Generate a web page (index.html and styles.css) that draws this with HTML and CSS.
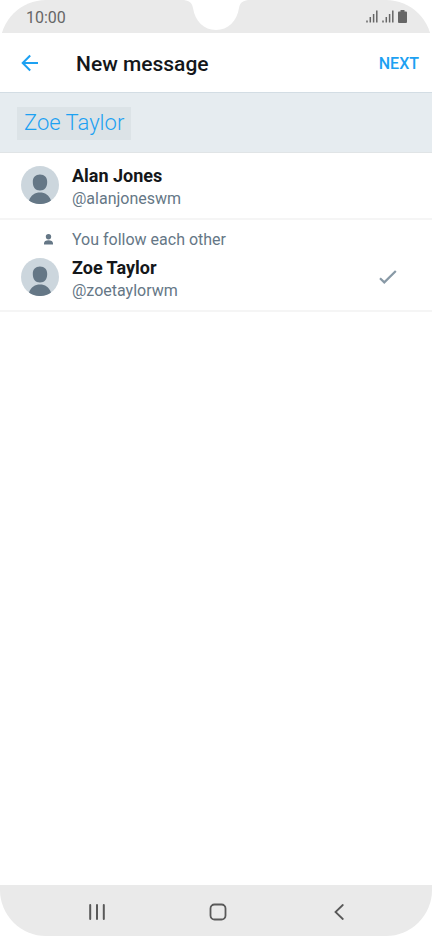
FILE: index.html
```html
<!DOCTYPE html>
<html lang="en">
<head>
<meta charset="utf-8">
<meta name="viewport" content="width=device-width, initial-scale=1">
<title>New message</title>
<link rel="stylesheet" href="styles.css">
</head>
<body>
<div class="phone">
  <div class="status">
    <time class="clock">10:00</time>
    <svg class="notch" width="64" height="31" viewBox="0 0 64 31" aria-hidden="true"><path fill="#fff" d="M0 0C6 1 8 3 9 8C11 21 20 30 32 30S53 21 55 8C56 3 58 1 64 0Z"/></svg>
    <div class="indicators">
      <svg width="12" height="13" viewBox="0 0 12 13" aria-hidden="true"><path d="M1 10.500v2M4.300 7v5.500M7.600 4v8.500M10.800 .5v12" stroke="#666" stroke-width="1.500"/></svg>
      <svg width="12" height="13" viewBox="0 0 12 13" aria-hidden="true"><path d="M1 10.500v2M4.300 7v5.500M7.600 4v8.500M10.800 .5v12" stroke="#666" stroke-width="1.500"/></svg>
      <svg class="battery" width="9" height="13" viewBox="0 0 9 13" aria-hidden="true"><path fill="#666" d="M2.500 0h4v1.500H8Q9 1.500 9 2.500V12Q9 13 8 13H1Q0 13 0 12V2.500Q0 1.500 1 1.500H2.500Z"/></svg>
    </div>
  </div>
  <header class="bar">
    <button class="back" type="button" aria-label="Back">
      <svg width="18" height="18" viewBox="0 0 18 18" fill="none" stroke="#1da1f2" stroke-width="2" aria-hidden="true"><path d="M17 9H2M9.200 1.500L1.700 9L9.200 16.500"/></svg>
    </button>
    <h1 class="title">New message</h1>
    <button class="next" type="button">NEXT</button>
  </header>
  <div class="recipients">
    <button class="chip" type="button">Zoe Taylor</button>
  </div>
  <main class="content">
    <ul class="people">
      <li>
        <button class="person" type="button">
          <svg class="avatar" width="38" height="38" viewBox="0 0 38 38" aria-hidden="true"><circle cx="19" cy="19" r="19" fill="#ccd6dd"/><path fill="#657786" d="M19 8.500c4.500 0 7.200 2.800 7.200 7.500 0 5.200-2.500 8.500-7.200 8.500s-7.200-3.300-7.200-8.500c0-4.700 2.700-7.500 7.200-7.500ZM8 34.500C10 29 14 26.500 19 26.500S28 29 30 34.500C24 39.200 14 39.200 8 34.500Z"/></svg>
          <span class="names"><span class="name">Alan Jones</span><span class="handle">@alanjoneswm</span></span>
        </button>
      </li>
      <li>
        <p class="relation">
          <svg width="9" height="11" viewBox="0 0 9 11" aria-hidden="true"><path fill="#657786" d="M4.500 0C6.300 0 7.200 1 7.200 2.600 7.200 4.400 6.200 5.600 4.500 5.600S1.800 4.400 1.800 2.600C1.800 1 2.700 0 4.500 0ZM0 10.500V9.500C0 7.300 1.800 6.300 4.500 6.300S9 7.300 9 9.500V10.500Z"/></svg>
          <span>You follow each other</span>
        </p>
        <button class="person" type="button" aria-pressed="true">
          <svg class="avatar" width="38" height="38" viewBox="0 0 38 38" aria-hidden="true"><circle cx="19" cy="19" r="19" fill="#ccd6dd"/><path fill="#657786" d="M19 8.500c4.500 0 7.200 2.800 7.200 7.500 0 5.200-2.500 8.500-7.200 8.500s-7.200-3.300-7.200-8.500c0-4.700 2.700-7.500 7.200-7.500ZM8 34.500C10 29 14 26.500 19 26.500S28 29 30 34.500C24 39.200 14 39.200 8 34.500Z"/></svg>
          <span class="names"><span class="name">Zoe Taylor</span><span class="handle">@zoetaylorwm</span></span>
          <svg class="check" width="18" height="14" viewBox="0 0 18 14" fill="none" stroke="#8899a6" stroke-width="2.200" aria-hidden="true"><path d="M1 8.200L5.300 12.400L16.800 1"/></svg>
        </button>
      </li>
    </ul>
  </main>
  <nav class="system" aria-label="System">
    <button type="button" aria-label="Recent apps"><svg width="16" height="16" viewBox="0 0 16 16" stroke="#595959" stroke-width="2" stroke-linecap="round" aria-hidden="true"><path d="M1.200 1v14M8 1v14M14.800 1v14"/></svg></button>
    <button type="button" aria-label="Home"><svg width="18" height="18" viewBox="0 0 18 18" fill="none" stroke="#595959" stroke-width="1.800" aria-hidden="true"><rect x="1.500" y="1.500" width="15" height="15" rx="4"/></svg></button>
    <button type="button" aria-label="Back"><svg width="10" height="16" viewBox="0 0 10 16" fill="none" stroke="#595959" stroke-width="1.800" stroke-linecap="round" aria-hidden="true"><path d="M8.800 1L1.500 8L8.800 15"/></svg></button>
  </nav>
</div>
</body>
</html>
```
FILE: styles.css
```css
* {
  box-sizing: border-box;
}

body {
  margin: 0;
  background: #fff;
  color: #14171a;
  font-family: Roboto, "Liberation Sans", sans-serif;
}

button {
  margin: 0;
  padding: 0;
  border: 0;
  background: none;
  color: inherit;
  font: inherit;
  text-align: left;
}

svg {
  display: block;
  flex: none;
}

.phone {
  display: flex;
  flex-direction: column;
  min-height: 100vh;
  overflow: hidden;
  border-radius: 46px;
}

.status {
  position: relative;
  display: flex;
  align-items: center;
  justify-content: space-between;
  height: 33px;
  padding: 2px 25px 0 26px;
  background: #eaeaea;
}

.clock {
  color: #666;
  font-size: 16px;
  line-height: 20px;
}

.notch {
  position: absolute;
  top: 0;
  left: 50%;
  transform: translateX(-50%);
}

.indicators {
  display: flex;
  gap: 4px;
  padding-bottom: 2px;
}

.bar {
  display: flex;
  align-items: center;
  height: 60px;
  padding: 2px 13px 0 21px;
  border-bottom: 1px solid #d3dde4;
}

.back {
  width: 55px;
  padding-bottom: 1px;
}

.title {
  flex: 1;
  margin: 0;
  font-size: 21px;
  line-height: 28px;
  font-weight: 500;
}

.next {
  color: #1da1f2;
  font-size: 16px;
  line-height: 20px;
  font-weight: 500;
}

.recipients {
  padding: 14px 17px 12px;
  border-bottom: 1px solid #e0e4e6;
  background: #e6ecf0;
}

.chip {
  display: block;
  padding: 0 7px 2px;
  background: #dce3e7;
  color: #1da1f2;
  font-size: 22px;
  line-height: 31px;
  font-weight: 300;
}

.content {
  flex: 1;
}

.people {
  margin: 0;
  padding: 0;
  list-style: none;
}

.people li {
  padding: 8px 0;
  border-bottom: 2px solid #f5f5f5;
}

.person {
  display: flex;
  align-items: center;
  gap: 13px;
  width: 100%;
  padding: 0 35px 0 21px;
}

.avatar,
.check {
  margin-bottom: 2px;
}

.names {
  display: flex;
  flex: 1;
  flex-direction: column;
  padding-top: 3px;
}

.name {
  font-size: 18px;
  line-height: 23px;
  font-weight: 700;
}

.handle {
  color: #657786;
  font-size: 16px;
  line-height: 23px;
}

.relation {
  display: flex;
  align-items: center;
  gap: 19px;
  margin: 0;
  padding: 0 0 2px 44px;
  color: #657786;
  font-size: 16px;
  line-height: 23px;
}

.system {
  display: flex;
  align-items: center;
  justify-content: space-between;
  height: 51px;
  padding: 2px 67px 0 71px;
  background: #eaeaea;
}

.system button {
  display: flex;
  align-items: center;
  justify-content: center;
  width: 52px;
  height: 48px;
}
```
